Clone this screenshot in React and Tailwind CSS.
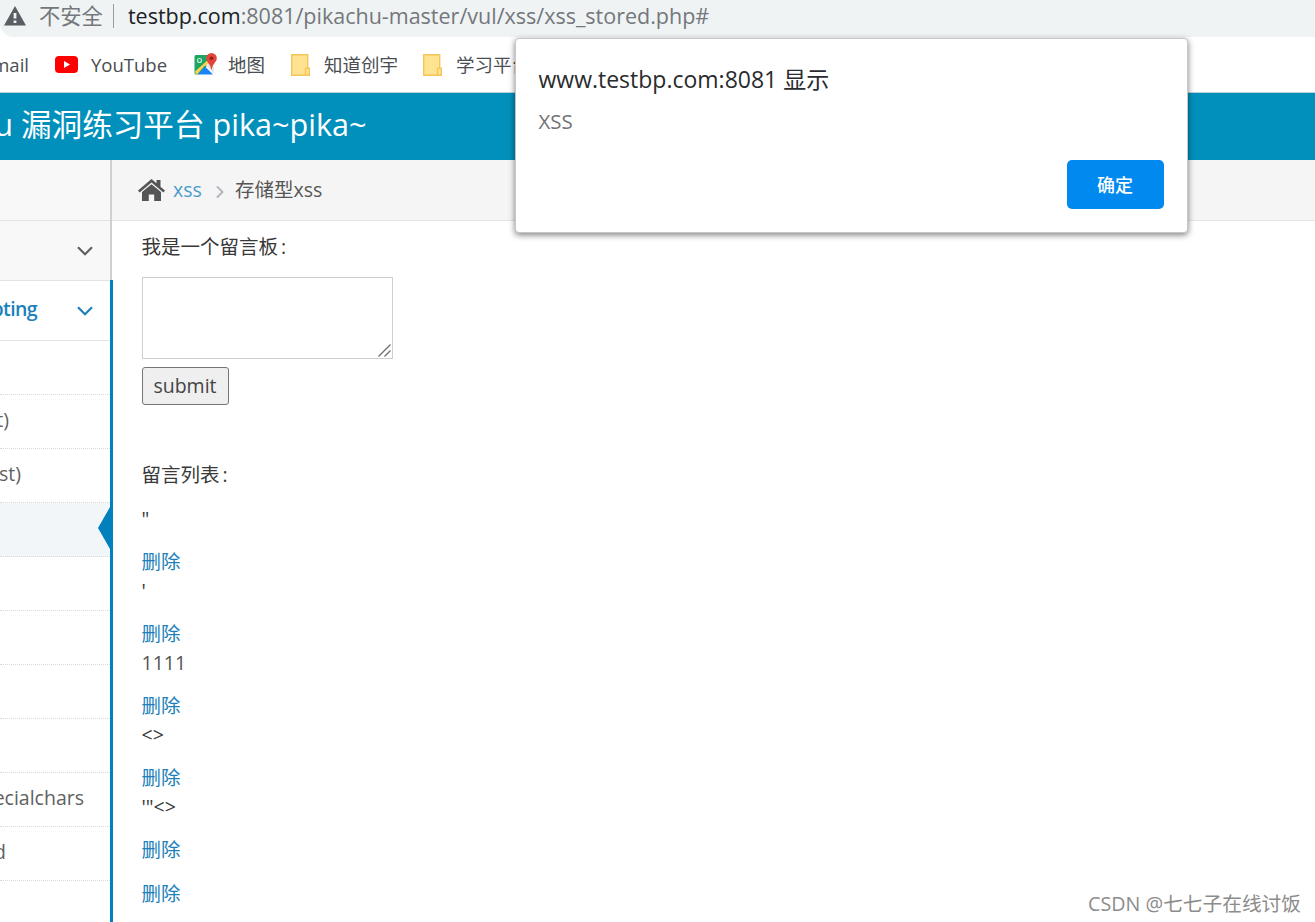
import { ChevronRight } from 'lucide-react';

const subItems = [
  { label: '', pad: '' },
  { label: 't)', pad: 'pr-[101px]' },
  { label: 'st)', pad: 'pr-[89px]' },
  { label: '', pad: '', active: true },
  { label: '', pad: '' },
  { label: '', pad: '' },
  { label: '', pad: '' },
  { label: '', pad: '' },
  { label: 'ecialchars', pad: 'pr-[26px]' },
  { label: 'd', pad: 'pr-[104px]' },
  { label: '', pad: '' },
];

const messages = [
  { text: '"', color: 'text-[#393939]' },
  { text: "'", color: 'text-[#393939]' },
  { text: '1111', color: 'text-[#555]' },
  { text: '<>', color: 'text-[#393939]' },
  { text: '\'"<>', color: 'text-[#393939]' },
];

function WarningIcon() {
  return (
    <svg className="w-[22px] h-[20px] shrink-0" viewBox="0 0 22 20">
      <path d="M11 0L22 19.500H0Z" fill="#5a5d61" />
      <path d="M9.600 7h2.800v5.600H9.600zM9.600 14.400h2.800v2.600H9.600z" fill="#f0f3f4" />
    </svg>
  );
}

function YouTubeIcon() {
  return (
    <svg className="w-[23px] h-[17px] shrink-0" viewBox="0 0 23 17">
      <rect width="23" height="17" rx="4" fill="#f00" />
      <path d="M9 5l6 3.500L9 12z" fill="#fff" />
    </svg>
  );
}

function MapsIcon() {
  return (
    <svg className="w-[24px] h-[23px] shrink-0" viewBox="0 0 24 23">
      <path d="M2 2h14v8L4 21.500H2A1.500 1.500 0 0 1 .5 20V3.500A1.500 1.500 0 0 1 2 2z" fill="#20a464" />
      <path d="M1 18.500L16 5l4 5-9.500 3L3 21.500H2z" fill="#fbd24d" />
      <path d="M3.500 21.500L11 13.500l8 8z" fill="#1a84f4" />
      <path d="M12 12.500l3-3L20 14v7z" fill="#e4e7e9" />
      <circle cx="5.500" cy="7.500" r="2" fill="none" stroke="#c9f0d9" strokeWidth="1.100" />
      <path d="M17.500 0a5.300 5.300 0 0 1 5.300 5.300c0 3.700-4 5-5 11.200h-.6c-1-6.200-5-7.500-5-11.200A5.300 5.300 0 0 1 17.500 0z" fill="#e5443a" />
      <circle cx="17.500" cy="5.300" r="1.800" fill="#8d1f1c" />
    </svg>
  );
}

function FolderIcon() {
  return (
    <svg className="w-[19px] h-[22px] shrink-0" viewBox="0 0 19 22">
      <path d="M.7.7h16v13.600h1.600v7H.7z" fill="#ffe391" stroke="#f4c65a" strokeWidth="1.400" />
      <path d="M14.500 21v-5.500q0-1.500 2-1.500" fill="none" stroke="#f4c65a" strokeWidth="1.400" />
    </svg>
  );
}

function HomeIcon() {
  return (
    <svg className="w-[27px] h-[22px] shrink-0" viewBox="0 0 27 22">
      <path d="M13.500 0L18.500 4.300V1h4v6.800L27 11.600l-1.600 1.900L13.500 3.600 1.600 13.500 0 11.600z" fill="#555" />
      <path d="M13.500 5.200L23 13v9h-6.800v-6.500h-5.400V22H4v-9z" fill="#555" />
    </svg>
  );
}

function MenuArrow() {
  return (
    <svg className="h-[10px] w-[16px] shrink-0" viewBox="0 0 16 10" fill="none" stroke="currentColor" strokeWidth="2.200">
      <path d="M1 1.200l7 7 7-7" />
    </svg>
  );
}

function AddressBar() {
  return (
    <div className="flex h-[37px] w-full shrink-0 items-start rounded-bl-[14px] bg-[#eff3f4] pl-1 text-[#74777b]">
      <div className="mt-[6px]"><WarningIcon /></div>
      <span className="ml-[13px] mt-[2px] text-[21.3px] leading-7">不安全</span>
      <span className="ml-[10px] mt-1 h-6 w-px bg-[#9b9da0]" />
      <span className="ml-[14px] mt-[2px] whitespace-nowrap text-[21.5px] leading-7">
        <span className="text-[#202124]">testbp.com</span>:8081/pikachu-master/vul/xss/xss_stored.php#
      </span>
    </div>
  );
}

function Bookmarks() {
  return (
    <div className="flex h-[56px] shrink-0 items-center border-b border-[#b9d3dc] text-[18.5px] text-[#4a4d51]">
      <div className="flex w-[29px] justify-end"><span>Gmail</span></div>
      <div className="ml-[26px]"><YouTubeIcon /></div>
      <span className="ml-[13px] w-[77px]">YouTube</span>
      <div className="ml-[26px]"><MapsIcon /></div>
      <span className="ml-[10px] w-[37px]">地图</span>
      <div className="ml-[26px]"><FolderIcon /></div>
      <span className="ml-[14px] w-[74px]">知道创宇</span>
      <div className="ml-[25px]"><FolderIcon /></div>
      <span className="ml-[14px]">学习平台</span>
    </div>
  );
}

function Sidebar() {
  return (
    <aside className="w-[113px] shrink-0">
      <div className="mr-[1px] h-[120px] border-r-2 border-[#d0d0d0] bg-[#f8f8f8]">
        <div className="h-[61px] border-b border-[#e3e3e3]" />
        <div className="flex h-[59px] items-center justify-end pr-[17px] text-[#606060]">
          <MenuArrow />
        </div>
      </div>
      <div className="h-[642px] border-r-[3px] border-[#0080bd] bg-white">
        <div className="flex h-[61px] items-center justify-end border-y border-[#e3e3e3] pr-[17px] text-[#1b80bb]">
          <span className="mr-[40px] mb-[3px] font-semibold tracking-[-0.6px]">pting</span>
          <MenuArrow />
        </div>
        {subItems.map((item, i) => (
          <div
            key={i}
            className={`relative flex h-[54px] items-center justify-end border-b border-dotted border-[#d9d9d9] text-[#616161] ${item.pad} ${
              item.active ? 'bg-[#f2f6f9]' : ''
            }`}
          >
            <span className="mb-[3px]">{item.label}</span>
            {item.active && (
              <svg className="absolute right-0 top-[4px] h-[42px] w-[12px]" viewBox="0 0 12 42">
                <path d="M12 0v42L0 21z" fill="#0080bd" />
              </svg>
            )}
          </div>
        ))}
      </div>
    </aside>
  );
}

function Content() {
  return (
    <main className="flex-1">
      <div className="-ml-[1px] flex h-[61px] items-center border-b border-[#e5e5e5] bg-[#f5f5f5] pl-[26px]">
        <HomeIcon />
        <span className="ml-[8px] w-[30px] text-[#4a9cca]">xss</span>
        <ChevronRight className="ml-[7px] mt-[3px] h-5 w-5 text-[#b2b6bf]" strokeWidth={2.4} />
        <span className="ml-[5px] text-[#555]">存储型xss</span>
      </div>
      <div className="flex flex-col items-start pl-[28.500px] text-[#393939]">
        <p className="mt-[11px] leading-[30px]">我是一个留言板<span className="ml-[3px]">:</span></p>
        <div className="relative mt-[15px]">
          <textarea className="block h-[82px] w-[251px] resize-none border border-[#cfcfcf] bg-white outline-none" />
          <svg className="absolute bottom-[2px] right-[2px] h-[13px] w-[13px]" viewBox="0 0 13 13" stroke="#6d6d6d" strokeWidth="1.300">
            <path d="M.5 12.500l12-12M6.500 12.500l6-6" />
          </svg>
        </div>
        <button className="mt-[8px] h-[38px] w-[87px] rounded-[3px] border-[1.5px] border-[#767676] bg-[#efefef] text-[19.5px] leading-none text-[#444]">
          submit
        </button>
        <p className="mt-[55px] leading-[30px]">留言列表<span className="ml-[3px]">:</span></p>
        <div className="mt-[14px]">
          {messages.map((msg) => (
            <div key={msg.text} className="h-[72px]">
              <p className={`leading-[29px] ${msg.color}`}>{msg.text}</p>
              <a className="mt-[15px] block leading-[28px] text-[#1b80bb]">删除</a>
            </div>
          ))}
          <a className="mt-[16px] block leading-[28px] text-[#1b80bb]">删除</a>
        </div>
      </div>
    </main>
  );
}

function AlertDialog() {
  return (
    <div className="absolute left-[514.500px] top-[38px] flex h-[195px] w-[673px] flex-col rounded-[4px] border border-[#c4c6c8] bg-white px-[23px] pb-[23px] pt-[24px] shadow-[0_2px_6px_rgba(0,0,0,0.5)]">
      <h1 className="whitespace-nowrap text-[23px] leading-8 text-[#2a2b2e]">www.testbp.com:8081 显示</h1>
      <p className="mt-[12px] text-[20.5px] leading-7 text-[#717276]">XSS</p>
      <button className="mt-auto h-[49px] w-[97px] self-end rounded-[5px] bg-[#0089ef] pt-[2px] text-[18px] font-medium text-white">
        确定
      </button>
    </div>
  );
}

export default function App() {
  return (
    <div className="relative flex h-[922px] w-[1315px] flex-col overflow-hidden bg-white font-['Open_Sans','Noto_Sans_CJK_SC',sans-serif] text-[19.5px]">
      <AddressBar />
      <Bookmarks />
      <header className="flex h-[67px] shrink-0 items-center bg-[#0090bb] pb-[4px] text-[30.6px] text-white">
        <div className="flex w-[13px] shrink-0 justify-end"><span>Pikachu</span></div>
        <span className="ml-[8px] whitespace-nowrap">漏洞练习平台 pika~pika~</span>
      </header>
      <div className="flex h-[762px]">
        <Sidebar />
        <Content />
      </div>
      <AlertDialog />
      <div className="absolute bottom-[2px] right-[14px] text-[19.7px] leading-8 text-[#8c8c8c]">CSDN @七七子在线讨饭</div>
    </div>
  );
}
